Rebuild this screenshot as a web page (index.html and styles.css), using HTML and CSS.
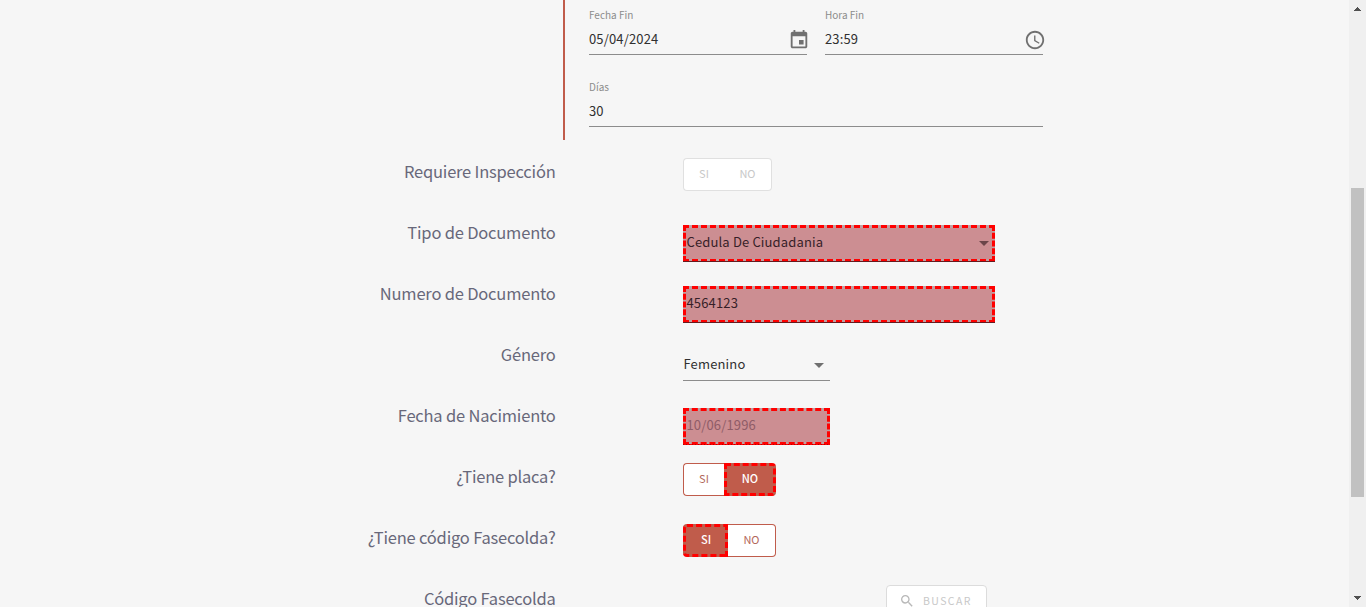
FILE: index.html
```html
<!DOCTYPE html>
<html lang="es">
<head>
<meta charset="utf-8">
<title>Datos de la póliza</title>
<link rel="stylesheet" href="styles.css">
</head>
<body>
<main class="page">
  <section class="period">
    <div class="period-field">
      <span class="caption">Fecha Fin</span>
      <div class="line-input"><span>05/04/2024</span>
        <svg class="icon" viewBox="0 0 24 24"><path d="M17 12h-5v5h5v-5zM16 1v2H8V1H6v2H5c-1.11 0-1.99.9-1.99 2L3 19c0 1.1.89 2 2 2h14c1.1 0 2-.9 2-2V5c0-1.1-.9-2-2-2h-1V1h-2zm3 18H5V8h14v11z"/></svg>
      </div>
    </div>
    <div class="period-field">
      <span class="caption">Hora Fin</span>
      <div class="line-input"><span>23:59</span>
        <svg class="icon" viewBox="0 0 24 24"><path d="M11.99 2C6.47 2 2 6.48 2 12s4.47 10 9.99 10C17.52 22 22 17.52 22 12S17.52 2 11.99 2zM12 20c-4.42 0-8-3.58-8-8s3.58-8 8-8 8 3.58 8 8-3.58 8-8 8zm.5-13H11v6l5.25 3.15.75-1.23-4.5-2.67z"/></svg>
      </div>
    </div>
    <div class="period-field wide">
      <span class="caption">Días</span>
      <div class="line-input"><span>30</span></div>
    </div>
  </section>

  <section class="rows">
    <div class="row"><span class="label">Requiere Inspección</span>
      <div class="toggle off"><span class="opt first">SI</span><span class="opt last">NO</span></div></div>
    <div class="row"><span class="label">Tipo de Documento</span>
      <div class="marked"><span>Cedula De Ciudadania</span><i class="caret"></i></div></div>
    <div class="row"><span class="label">Numero de Documento</span>
      <div class="marked"><span>4564123</span></div></div>
    <div class="row"><span class="label">Género</span>
      <div class="select"><span>Femenino</span><i class="caret"></i></div></div>
    <div class="row"><span class="label">Fecha de Nacimiento</span>
      <div class="marked short"><span>10/06/1996</span></div></div>
    <div class="row"><span class="label">¿Tiene placa?</span>
      <div class="toggle"><span class="opt first">SI</span><span class="opt last active">NO</span></div></div>
    <div class="row"><span class="label">¿Tiene código Fasecolda?</span>
      <div class="toggle"><span class="opt first active">SI</span><span class="opt last">NO</span></div></div>
    <div class="row"><span class="label">Código Fasecolda</span>
      <div class="search">
        <svg class="search-icon" viewBox="0 0 24 24"><path d="M15.5 14h-.79l-.28-.27A6.47 6.47 0 0 0 16 9.5 6.5 6.5 0 1 0 9.5 16c1.61 0 3.09-.59 4.23-1.57l.27.28v.79l5 4.99L20.49 19l-4.99-5zm-6 0C7.01 14 5 11.99 5 9.5S7.01 5 9.5 5 14 7.01 14 9.5 11.99 14 9.5 14z"/></svg>
        <span>BUSCAR</span>
      </div></div>
  </section>
</main>
<aside class="scrollbar">
  <svg class="arrow" viewBox="0 0 7 4" shape-rendering="crispEdges"><path d="M3 0h1v1h1v1h1v1h1v1H0V3h1V2h1V1h1z"/></svg>
  <div class="thumb"></div>
  <svg class="arrow down" viewBox="0 0 7 4" shape-rendering="crispEdges"><path d="M0 0h7v1H6v1H5v1H4v1H3V3H2V2H1V1H0z"/></svg>
</aside>
</body>
</html>
```
FILE: styles.css
```css
* { box-sizing: border-box; }

body {
  margin: 0;
  height: 607px;
  display: flex;
  overflow: hidden;
  background: #f6f6f6;
  color: #303030;
  font-family: "Noto Sans CJK SC", "Noto Sans", sans-serif;
  font-size: 13px;
}

.page { width: 1349px; height: 607px; overflow: hidden; }

.period {
  margin-left: 563px;
  width: 482px;
  height: 140px;
  padding: 7px 2px 0 24px;
  border-left: 2px solid #c05c4b;
  display: grid;
  grid-template-columns: 218px 218px;
  column-gap: 18px;
  row-gap: 24px;
  align-content: start;
}
.period-field { height: 48px; }
.wide { grid-column: span 2; }
.caption {
  display: block;
  height: 16px;
  line-height: 16px;
  font-size: 10px;
  color: #8c8c8c;
}
.line-input {
  display: flex;
  justify-content: space-between;
  height: 32px;
  line-height: 32px;
  border-bottom: 1px solid #8c8c8c;
  letter-spacing: .15px;
}
.icon {
  width: 22px;
  height: 22px;
  margin: 6px -3px 0 0;
  fill: #707070;
}

.rows { margin-top: 18px; }
.row { display: flex; height: 61px; align-items: flex-start; }
.label {
  width: 555.6px;
  margin-right: 127.4px;
  text-align: right;
  font-size: 16.5px;
  letter-spacing: -.2px;
  line-height: 26px;
  color: #68687a;
}

.toggle {
  display: flex;
  height: 33px;
  font-size: 11px;
  line-height: 29px;
  color: #b3685b;
}
.opt {
  background: #fff;
  border: 1px solid #c05c4b;
  text-align: center;
}
.first { width: 41px; border-right: 0; border-radius: 4px 0 0 4px; }
.last { width: 48px; border-left: 0; border-radius: 0 4px 4px 0; }
.off { color: #c8c8c8; }
.off .opt { border-color: #e0e0e0; }
.opt.active {
  background: #c05c4b;
  border: 3px dashed #f00;
  color: #fff;
  line-height: 25px;
}
.first.active { width: 45px; padding-left: 1px; font-weight: 500; }
.last.active { width: 52px; font-weight: 500; }

.marked {
  display: flex;
  justify-content: space-between;
  align-items: center;
  width: 312px;
  height: 37px;
  margin-top: 6px;
  padding: 0 0 4px .5px;
  border: 3px dashed #f00;
  background: linear-gradient(#cc8e92, #cc8e92) padding-box, #bfa0a2 border-box;
  position: relative;
  line-height: 19px;
  color: #371f28;
  letter-spacing: .15px;
}
.marked::after {
  content: "";
  position: absolute;
  left: -3px;
  right: -3px;
  bottom: -3px;
  height: 1px;
  background: #651b20;
}
.marked .caret { border-top-color: #6b4549; margin: 3px 3px 0 0; }
.short { width: 147px; color: #8f5c67; }
.short::after { background: repeating-linear-gradient(90deg, #b00000 0 1px, #f00 1px 3px); }

.select {
  display: flex;
  justify-content: space-between;
  align-items: center;
  width: 147px;
  height: 34px;
  margin-top: 6px;
  padding: 4px 6px 4px .5px;
  border-bottom: 1px solid #8c8c8c;
  line-height: 19px;
  letter-spacing: .15px;
}
.select .caret { margin-top: 3px; }
.caret {
  border: 5px solid transparent;
  border-top-color: #707070;
  border-bottom: 0;
}

.search {
  display: flex;
  align-items: center;
  width: 101px;
  height: 33px;
  margin-left: 203px;
  padding: 0 0 2px 12px;
  border: 1px solid #dcdcdc;
  border-radius: 4px;
  background: #fff;
  color: #c8c8c8;
  font-size: 10.5px;
  letter-spacing: 1.4px;
}
.search-icon { width: 16px; height: 16px; margin-right: 8px; fill: #b8b8b8; }

.scrollbar {
  width: 17px;
  display: flex;
  flex-direction: column;
  padding: 7px 1px 7px 2px;
  background: #f0f0f0;
}
.arrow { width: 7px; height: 4px; margin-left: 3px; fill: #505050; }
.thumb { width: 13px; height: 309px; margin-top: 177px; background: #c1c1c1; }
.down { margin-top: auto; }
```
